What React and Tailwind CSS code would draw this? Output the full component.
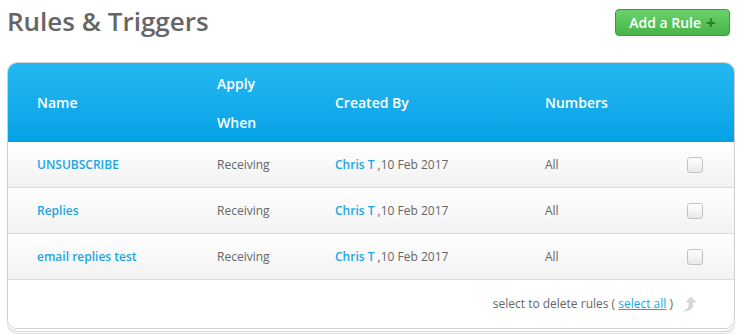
import { useState } from 'react'

const rules = [
  { name: 'UNSUBSCRIBE', when: 'Receiving', by: 'Chris T', date: '10 Feb 2017', numbers: 'All' },
  { name: 'Replies', when: 'Receiving', by: 'Chris T', date: '10 Feb 2017', numbers: 'All' },
  { name: 'email replies test', when: 'Receiving', by: 'Chris T', date: '10 Feb 2017', numbers: 'All' },
]

const cols = 'grid grid-cols-[180px_118px_210px_142px_1fr] pl-[29px]'

export default function App() {
  const [checked, setChecked] = useState([false, false, false])

  return (
    <div className="h-[335px] w-[742px] bg-white font-['Open_Sans',sans-serif] text-[#666]">
      {/* header */}
      <div className="flex items-start justify-between pl-[7px] pr-[12px] pt-[3px]">
        <h1 className="text-[26px] font-semibold leading-[36px] text-[#666]">Rules &amp; Triggers</h1>
        <button className="mt-[6px] flex h-[27px] w-[115px] items-center justify-center gap-[5px] rounded-[4px] border border-[#3e9a3e] bg-gradient-to-b from-[#6ad26a] to-[#47b447] text-[14px] font-semibold text-white">
          Add a Rule
          <span className="text-[17px] font-bold leading-none text-[#2f7a2f]">+</span>
        </button>
      </div>

      {/* table card */}
      <div className="ml-[7px] mt-[23px] w-[728px] overflow-hidden rounded-[10px] border border-[#cfcfcf] shadow-[0_2px_0_#fff,0_3px_0_#d0d0d0,0_4px_0_#fff,0_5px_0_#dcdcdc]">
        <div className={`${cols} h-[79px] items-center bg-gradient-to-b from-[#24b8f1] to-[#03a2e6] text-[14px] font-semibold text-white`}>
          <div>Name</div>
          <div className="leading-[39px]">Apply<br />When</div>
          <div>Created By</div>
          <div>Numbers</div>
          <div />
        </div>

        {rules.map((r, i) => (
          <div
            key={i}
            className={`${cols} h-[46px] items-center border-b border-[#dcdcdc] bg-gradient-to-b from-white to-[#f2f2f2] text-[12px]`}
          >
            <a className="font-semibold text-[#1aa6e6]">{r.name}</a>
            <div>{r.when}</div>
            <div>
              <span className="font-semibold text-[#1aa6e6]">{r.by}</span> ,{r.date}
            </div>
            <div>{r.numbers}</div>
            <div>
              <button
                onClick={() => setChecked(c => c.map((v, j) => (j === i ? !v : v)))}
                className="block h-[16px] w-[16px] rounded-[3px] border border-[#c2c2c2] bg-gradient-to-b from-white to-[#e9e9e9] shadow-[inset_0_1px_0_#fff]"
              />
            </div>
          </div>
        ))}

        <div className="flex h-[48px] items-center justify-end gap-[8px] bg-white pr-[37px] text-[12px] text-[#666]">
          <span>
            select to delete rules ( <a className="text-[#1aa6e6] underline">select all</a> )
          </span>
          <svg width="16" height="16" viewBox="0 0 16 16">
            <path
              d="M10 0.5 L15.5 6.5 H12 V9 C12 13 9 15.5 1 15.5 C5.5 14 7.5 12 7.5 9 V6.5 H4.5 Z"
              fill="#d6d6d6"
            />
          </svg>
        </div>
      </div>
    </div>
  )
}
